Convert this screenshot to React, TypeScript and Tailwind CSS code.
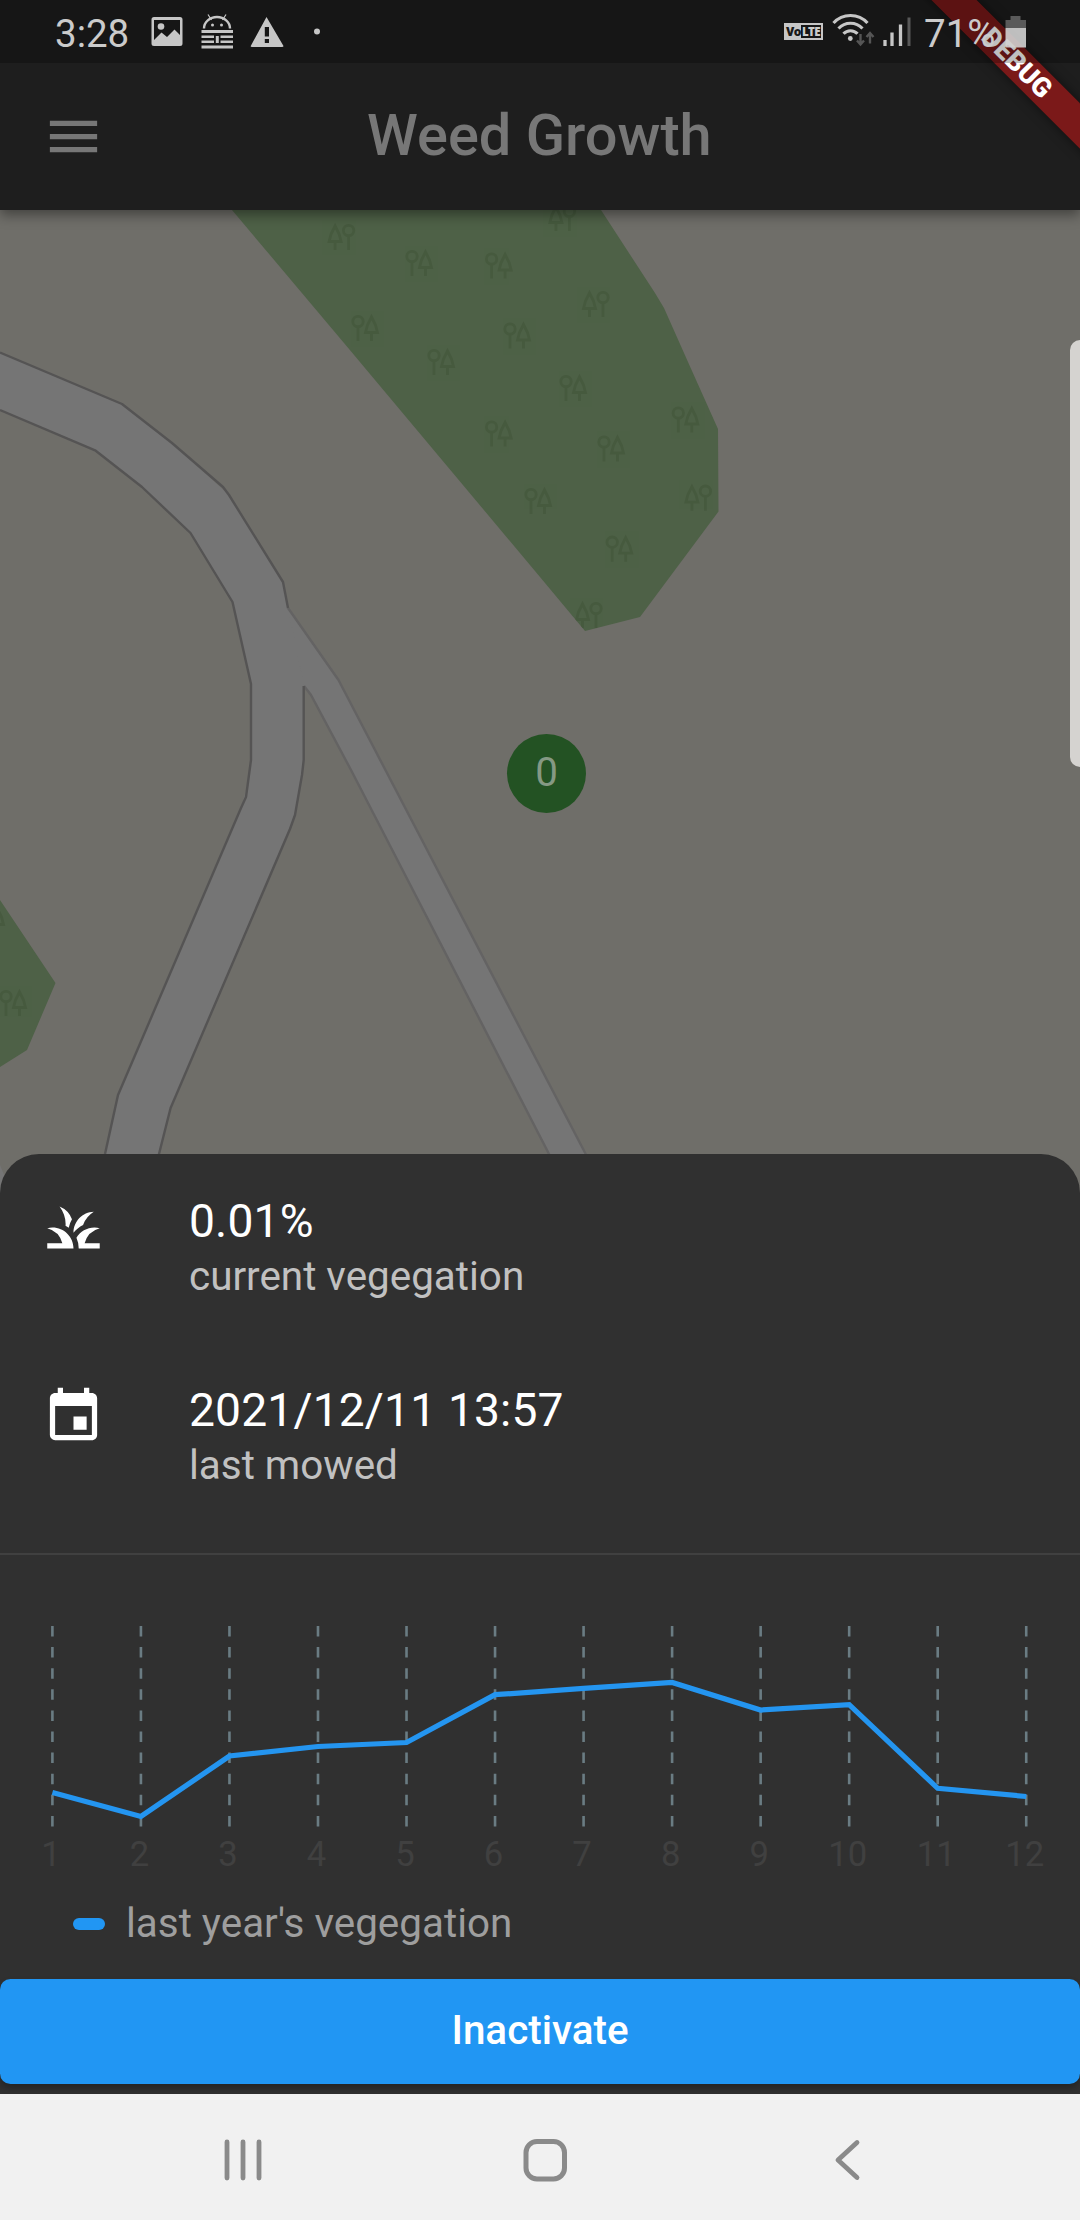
import React from "react";
import { MdMenu, MdGrass, MdEvent } from "react-icons/md";

const FOREST = "232,210 344,343 540,577 585,631 640,617 718.5,511.5 718,429 688,362 664,308 655,293 601,210 590,195 220,195";
const SMALL_FOREST = "-10,885 0,900 55.5,983 27,1050 0,1067 -10,1072";
const TREES: [number, number, boolean][] = [
  [341.6, 237, true], [419, 263, false], [498.6, 265.5, false], [365, 328, false],
  [441, 362, false], [517, 335.5, false], [498.6, 433.5, false], [538, 501, false],
  [562.4, 218, true], [596, 304, true], [573, 388, false], [685.3, 419.5, false],
  [611, 448.5, false], [698.4, 497.7, true], [619.2, 548.7, false], [589, 615, true],
  [13, 1003, false], [-9, 920, false],
];

const VALUES = [1792.5, 1816.5, 1756, 1746.5, 1742.5, 1694.7, 1688.3, 1682.5, 1710, 1704.7, 1788.3, 1796.5];
const CHART_TOP = 1620;
const xAt = (i: number) => 52.4 + i * 88.53;

function Tree({ x, y, flip }: { x: number; y: number; flip: boolean }) {
  return (
    <g transform={`translate(${x} ${y}) scale(${flip ? -1 : 1} 1)`} fill="none" stroke="#42553a" strokeWidth="2.8" opacity="0.6">
      <circle cx="-7" cy="-6.5" r="5.2" />
      <path d="M-7-1V13M6.500 4V13M6.500-11L2.500-3 0.500 4.500H12.500L10.500-3Z" />
    </g>
  );
}

function MapView() {
  return (
    <svg className="block h-full w-full" viewBox="0 210 1080 984" preserveAspectRatio="none">
      <defs>
        <clipPath id="woods">
          <polygon points={FOREST} />
          <polygon points={SMALL_FOREST} />
        </clipPath>
      </defs>
      <rect y="210" width="1080" height="984" fill="#6f6e69" />
      <polygon points={FOREST} fill="#4e6147" />
      <polygon points={SMALL_FOREST} fill="#4e6147" />
      <g clipPath="url(#woods)">
        {TREES.map(([x, y, f], i) => (
          <Tree key={i} x={x} y={y} flip={f} />
        ))}
      </g>
      <polygon points="0,1165 12,1194 0,1194" fill="#757575" />
      <path d="M283 582 288 608 338.5 680 585.7 1154 606 1194H570L549 1154 351 770 310 692 304 686 250 620Z" fill="#757575" />
      <path d="M0 352.5 122 404 172 443 229 495 283 582 288 608 304 686V760L295 815 170.6 1108 159 1154 150 1194H95L105 1154 118 1095 241 808 246 790 251 760V684L232.5 602 190.5 533 142 487 95.7 450.7 0 410Z" fill="#757575" />
      <g fill="none" strokeLinejoin="round" strokeWidth="2.4">
        <path d="M288 608 338.5 680 585.7 1154 606 1194M304 686 311 695 351 770 549 1154 570 1194" stroke="#646363" />
        <path d="M0 352.5 122 404 172 443 223 487 229 495 283 582 288 608M303.7 686V760L302 775 295 815 290 829 170.6 1108 159 1154 150 1194M0 410 95.7 450.7 142 487 190.5 533 232.5 602 237 622 251 684V760L246 797 241 808 118 1095 105 1154 95 1194" stroke="#555454" />
      </g>
    </svg>
  );
}

function StatusBar() {
  return (
    <div className="absolute inset-x-0 top-0 flex h-[63px] items-start bg-black/25 text-[38.5px] leading-[45px] text-[#cbcbcb]">
      <span className="ml-[55px] mt-[11px] w-[96px]">3:28</span>
      <svg className="mt-[12px]" width="180" height="40" viewBox="150 12 180 40" fill="#c6c6c6">
        <path fillRule="evenodd" d="M153 17H179Q181.500 17 181.500 19.500V43.500Q181.500 46 179 46H153Q150.500 46 150.500 43.500V19.500Q150.500 17 153 17ZM153 20V40L160.500 32.500 166 37 173.500 29.500 179 35V20Z" />
        <circle cx="160" cy="26.500" r="3.300" />
        <path d="M203 28.500A13 11.500 0 0 1 229 28.500" fill="none" stroke="#c6c6c6" strokeWidth="2.400" />
        <path d="M207 14.500 210.500 20M225 14.500 221.500 20" fill="none" stroke="#c6c6c6" strokeWidth="1.200" />
        <circle cx="211.500" cy="25" r="1.500" />
        <circle cx="220.500" cy="25" r="1.500" />
        <path d="M200.500 30H232V33H200.500ZM200.500 35.500H213V38H200.500ZM219.500 35.500H232V38H219.500ZM200.500 40.500H213V43H200.500ZM219.500 40.500H232V43H219.500ZM200.500 45.500H232V48.500H200.500ZM214.800 36H217.800V43H214.800Z" />
        <path fillRule="evenodd" d="M265.500 17 282.500 46Q282.500 47 281 47H251Q249 47 250 45.500ZM263.800 27V36.500H268V27ZM263.800 39V43H268V39Z" />
        <circle cx="316" cy="31.500" r="3" />
      </svg>
      <span className="ml-[453px] mt-[23px] flex h-[17px] w-[39px] border-2 border-[#c6c6c6] font-['Open_Sans'] text-[12px] leading-[13px] font-extrabold tracking-[-0.6px]">
        <span className="w-[15px] bg-[#c6c6c6] text-[#191919]">Vo</span>
        <span className="pl-[1px] text-[11.5px]">LTE</span>
      </span>
      <svg className="ml-[9px] mt-[12px]" width="92" height="40" viewBox="831 12 92 40" fill="none" stroke="#c6c6c6" strokeWidth="3.100">
        <path d="M832.500 23A23 23 0 0 1 866.500 23M837.500 28.500A16.500 16.500 0 0 1 861.500 28.500M842.500 33.800A9.500 9.500 0 0 1 856.500 33.800" />
        <circle cx="849.300" cy="38.500" r="2.400" fill="#c6c6c6" stroke="none" />
        <path d="M859.500 34V44M856 40.500 859.500 44.500 863 40.500M869 43.500V34M865.500 37 869 33 872.500 37" stroke="#555" strokeWidth="2.400" />
        <path d="M884 40V46M891 32.500V46M899.500 24.500V46" strokeWidth="3.300" />
        <path d="M908 17.500V46" stroke="#585858" strokeWidth="3" />
      </svg>
      <span className="mt-[11px] w-[81px]">71%</span>
      <svg className="mt-[12px]" width="22" height="40" viewBox="1004 12 22 40">
        <path d="M1004.500 20H1009.500V16H1019.500V20H1025V28H1004.500Z" fill="#666" fillOpacity="0.85" />
        <path d="M1004.500 28H1025V47.500H1004.500Z" fill="#d2d2d2" fillOpacity="0.9" />
      </svg>
    </div>
  );
}

function DebugBanner() {
  return (
    <div className="pointer-events-none absolute right-0 top-0 h-[160px] w-[160px] overflow-hidden">
      <div className="absolute left-[-53px] top-[46.5px] flex h-[32px] w-[300px] rotate-45 items-center justify-center bg-[#7b1919] text-[27px] leading-none font-black text-white shadow-[0_0_12px_rgba(0,0,0,0.5)]">
        DEBUG
      </div>
    </div>
  );
}

function Tile({ icon, title, subtitle }: { icon: React.ReactNode; title: string; subtitle: string }) {
  return (
    <div className="flex h-[189px] items-start pl-[42px]">
      <span className="w-[147px] pt-[21px]">{icon}</span>
      <div className="flex flex-col pt-[19px]">
        <span className="text-[46.2px] leading-[54px] tracking-[0.15px] text-white">{title}</span>
        <span className="mt-[2px] text-[40.4px] leading-[54px] text-[#c1c1c1]">{subtitle}</span>
      </div>
    </div>
  );
}

function Chart() {
  return (
    <svg className="block" width="1080" height="262" viewBox={`0 ${CHART_TOP} 1080 262`}>
      {VALUES.map((_, i) => (
        <line key={i} x1={xAt(i)} x2={xAt(i)} y1="1626" y2="1827" stroke="#6a7c83" strokeWidth="2.600" strokeDasharray="10.500 10.600" />
      ))}
      <polyline points={VALUES.map((y, i) => `${xAt(i)},${y}`).join(" ")} fill="none" stroke="#2495f0" strokeWidth="5.250" />
      {VALUES.map((_, i) => (
        <text key={i} x={xAt(i) - 1.5} y="1865.500" textAnchor="middle" fontSize="34.650" fill="#404040">
          {i + 1}
        </text>
      ))}
    </svg>
  );
}

export default function App() {
  return (
    <div className="relative flex h-[2220px] w-[1080px] flex-col overflow-hidden bg-[#303030] font-[Roboto]">
      <header className="relative z-10 flex h-[210px] shrink-0 items-center bg-[#1e1e1e] pl-[42px] pt-[63px] shadow-[0_5px_12px_rgba(0,0,0,0.4)]">
        <MdMenu className="h-[63px] w-[63px] text-[#777]" />
        <h1 className="ml-[262px] pb-[2px] text-[57.75px] leading-none font-medium text-[#777]">Weed Growth</h1>
        <DebugBanner />
        <StatusBar />
      </header>
      <main className="relative h-[984px] shrink-0">
        <MapView />
        <div className="absolute left-[507px] top-[524px] flex h-[79px] w-[79px] items-center justify-center rounded-full bg-[#235223] text-[40.4px] text-[#859984]">
          0
        </div>
        <div className="absolute right-0 top-[130px] h-[427px] w-[10px] rounded-l-[10px] bg-[#d5d3d0]" />
      </main>
      <section className="relative -mt-10 flex h-[940px] shrink-0 flex-col rounded-t-[39px] bg-[#303030] pt-[21px]">
        <Tile icon={<MdGrass className="h-[63px] w-[63px] text-white" />} title="0.01%" subtitle="current vegegation" />
        <Tile icon={<MdEvent className="h-[63px] w-[63px] text-white" />} title="2021/12/11 13:57" subtitle="last mowed" />
        <div className="h-[2px] bg-[#404040]" />
        <div className="mt-[65px]">
          <Chart />
        </div>
        <div className="mt-[16px] flex h-[52px] items-center pl-[73px]">
          <span className="h-[12px] w-[32px] rounded-full bg-[#2196f3]" />
          <span className="ml-[21px] text-[40.4px] leading-[52px] text-[#9e9e9e]">last year's vegegation</span>
        </div>
        <button className="mt-auto mb-[10px] h-[105px] w-full rounded-[10.5px] bg-[#2196f3] text-[40.4px] leading-none font-medium text-white shadow-[0_4px_6px_rgba(0,0,0,0.25)]">
          Inactivate
        </button>
      </section>
      <nav className="relative h-[126px] shrink-0 bg-[#f1f1f1]">
        <svg className="block" width="1080" height="126" viewBox="0 2094 1080 126" fill="none" stroke="#8a8a8a" strokeWidth="4.800" strokeLinecap="round">
          <path d="M227 2142V2178M243 2142V2178M259 2142V2178" />
          <rect x="526" y="2141.500" width="38.500" height="37.500" rx="11" strokeWidth="5" />
          <path d="M857 2142.500 838 2160 857 2177.500" strokeLinejoin="round" />
        </svg>
      </nav>
    </div>
  );
}
